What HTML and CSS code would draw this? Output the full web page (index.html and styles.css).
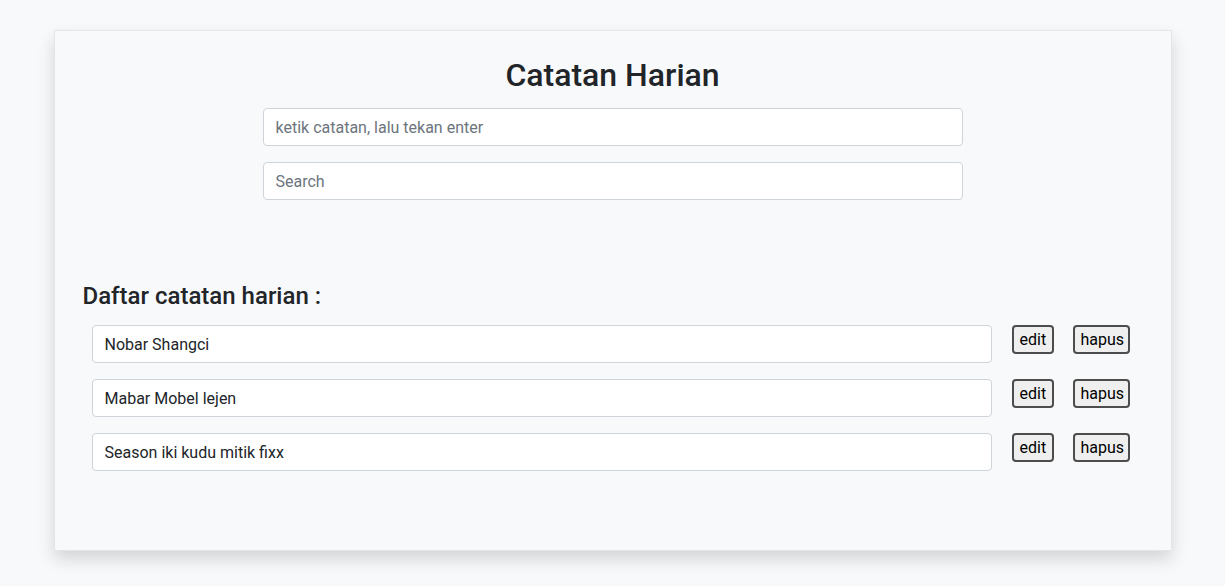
FILE: index.html
```html
<!DOCTYPE html>
<html lang="id">
<head>
<meta charset="utf-8">
<title>Catatan Harian</title>
<link rel="stylesheet" href="styles.css">
</head>
<body>
  <main class="card">
    <h1 class="title">Catatan Harian</h1>
    <div class="form">
      <input class="form-control" type="text" placeholder="ketik catatan, lalu tekan enter">
      <input class="form-control" type="text" placeholder="Search">
    </div>
    <h2 class="list-title">Daftar catatan harian :</h2>
    <ul class="list">
      <li class="row">
        <input class="form-control item" type="text" value="Nobar Shangci">
        <button class="btn btn-edit">edit</button>
        <button class="btn btn-del">hapus</button>
      </li>
      <li class="row">
        <input class="form-control item" type="text" value="Mabar Mobel lejen">
        <button class="btn btn-edit">edit</button>
        <button class="btn btn-del">hapus</button>
      </li>
      <li class="row">
        <input class="form-control item" type="text" value="Season iki kudu mitik fixx">
        <button class="btn btn-edit">edit</button>
        <button class="btn btn-del">hapus</button>
      </li>
    </ul>
  </main>
</body>
</html>
```
FILE: styles.css
```css
* { box-sizing: border-box; }

html, body {
  margin: 0;
  padding: 0;
}

body {
  min-height: 100vh;
  background: #f8f9fa;
  font-family: Roboto, "Liberation Sans", sans-serif;
  font-size: 16px;
  line-height: 1.5;
  color: #212529;
  padding: 30px 0 40px;
}

.card {
  display: block;
  width: 1118px;
  margin: 0 auto;
  background: #f8f9fa;
  border: 1px solid #e3e5e8;
  box-shadow: 0 8px 16px rgba(0, 0, 0, 0.15);
  padding: 25px 0 79px;
}

.title {
  margin: 0 0 14px;
  text-align: center;
  font-size: 32px;
  font-weight: 500;
  line-height: 38px;
  color: #212529;
}

.form {
  width: 700px;
  margin: 0 auto;
  display: flex;
  flex-direction: column;
  gap: 16px;
}

.form-control {
  display: block;
  height: 38px;
  padding: 6px 12px;
  font-family: inherit;
  font-size: 16px;
  line-height: 24px;
  color: #212529;
  background: #fff;
  border: 1px solid #ced4da;
  border-radius: 4px;
  outline: none;
}

.form-control::placeholder {
  color: #6c757d;
}

.list-title {
  margin: 82px 0 14px 28px;
  font-size: 24px;
  font-weight: 500;
  line-height: 29px;
  color: #212529;
}

.list {
  list-style: none;
  margin: 0;
  padding: 0 0 0 37px;
  display: flex;
  flex-direction: column;
  gap: 16px;
}

.row {
  display: flex;
  align-items: flex-start;
}

.item {
  width: 900px;
}

.btn {
  font-family: inherit;
  font-size: 16px;
  line-height: 24px;
  height: 29px;
  padding: 0 6px;
  color: #000;
  background: #efefef;
  border: 2px solid #4d4d4d;
  border-radius: 4px;
  text-align: center;
  cursor: pointer;
}

.btn-edit { margin-left: 20px; width: 42px; }
.btn-del { margin-left: 19px; width: 57px; }
```
